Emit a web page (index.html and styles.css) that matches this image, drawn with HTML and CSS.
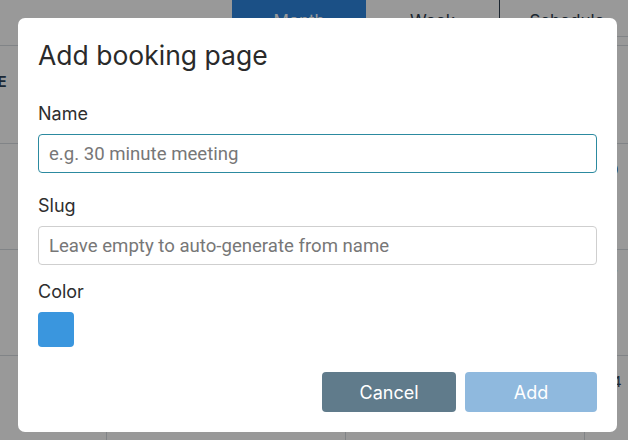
FILE: index.html
```html
<!DOCTYPE html>
<html lang="en">
<head>
  <meta charset="UTF-8" />
  <meta name="viewport" content="width=device-width, initial-scale=1.0"/>
  <title>Booking pages</title>
  <link rel="stylesheet" href="styles.css">
</head>
<body>
  <div class="page">
    <div class="toolbar">
      <div class="tabs">
        <button class="tab active">Month</button>
        <button class="tab">Week</button>
        <button class="tab">Schedule</button>
      </div>
    </div>

    <div class="calendar">
      <div class="cell head">TUE</div>
      <div class="cell head">WED</div>
      <div class="cell head">THU</div>
      <div class="cell head">FRI</div>

      <div class="cell"></div>
      <div class="cell"></div>
      <div class="cell"></div>
      <div class="cell"><span class="date">10</span></div>

      <div class="cell"></div>
      <div class="cell"></div>
      <div class="cell"></div>
      <div class="cell"><span class="date">17</span></div>

      <div class="cell"></div>
      <div class="cell"></div>
      <div class="cell"></div>
      <div class="cell"><span class="date">24</span></div>
    </div>
  </div>

  <div class="backdrop">
    <div class="modal">
      <h2 class="modal-title">Add booking page</h2>

      <label class="field-label" for="bp-name">Name</label>
      <input class="field-input focused" id="bp-name" type="text" placeholder="e.g. 30 minute meeting">

      <label class="field-label" for="bp-slug">Slug</label>
      <input class="field-input slug" id="bp-slug" type="text" placeholder="Leave empty to auto-generate from name">

      <label class="field-label">Color</label>
      <div class="swatch"></div>

      <div class="actions">
        <button class="btn btn-cancel">Cancel</button>
        <button class="btn btn-add" disabled>Add</button>
      </div>
    </div>
  </div>
</body>
</html>
```

FILE: styles.css
```css
body {
  margin: 0;
  font-family: Inter, "Noto Sans", sans-serif;
  background: #fff;
  overflow: hidden;
}

/* page under the dialog */
.page {
  width: 628px;
  height: 440px;
  overflow: hidden;
}
.toolbar {
  display: flex;
  height: 37px;
  padding-left: 232px;
}
.tabs {
  display: flex;
  flex: 1;
  border-bottom: 1px solid #d8dde2;
}
.tab {
  width: 134px;
  border: none;
  border-right: 1px solid #2f4050;
  background: #fff;
  color: #2f4050;
  font-family: Inter, sans-serif;
  font-size: 17px;
  padding: 5px 0 0;
  text-align: center;
  align-self: stretch;
}
.tab.active {
  background: #2d86e0;
  color: #fff;
  border-right: none;
}
.tab:last-child { border-right: none; flex: 1; }

.calendar {
  display: grid;
  grid-template-columns: repeat(4, 239px);
  grid-template-rows: 98px 106px 106px 106px;
  margin-top: 8px;
  margin-left: -132px;
  border-top: 1px solid #d8dde2;
}
.cell {
  border-right: 1px solid #d8dde2;
  border-bottom: 1px solid #d8dde2;
  padding: 16px 18px;
  font-size: 15px;
  color: #33475b;
}
.cell.head {
  border-right: none;
  text-align: center;
  font-weight: 700;
  padding: 26px 14px 0 22px;
  color: #2d4459;
}

/* dialog */
.backdrop {
  position: fixed;
  inset: 0;
  background: rgba(0, 0, 0, 0.4);
}
.modal {
  position: absolute;
  left: 18px;
  top: 18px;
  width: 599px;
  height: 414px;
  box-sizing: border-box;
  padding: 20px;
  background: #fff;
  border-radius: 7px;
}
.modal-title {
  margin: 0 0 31px;
  font-size: 26.5px;
  font-weight: 400;
  line-height: 34px;
  color: #2a2a2a;
}
.field-label {
  display: block;
  font-size: 18px;
  line-height: 22px;
  color: #2e2e2e;
  margin-bottom: 9px;
}
.field-input {
  display: block;
  width: 100%;
  height: 39px;
  box-sizing: border-box;
  margin: 0 0 22px;
  padding: 0 10px;
  border: 1px solid #cfcfcf;
  border-radius: 4px;
  font-family: Roboto, sans-serif;
  font-size: 18.6px;
  color: #333;
  outline: none;
}
.field-input.slug { margin-bottom: 16px; }
.field-input::placeholder { color: #777; }
.field-input.focused { border-color: #2c8aa0; }

.swatch {
  width: 36px;
  height: 35px;
  border-radius: 4px;
  background: #3a96de;
}

.actions {
  display: flex;
  justify-content: flex-end;
  gap: 9px;
  margin-top: 25px;
}
.btn {
  width: 134px;
  height: 40px;
  border: none;
  border-radius: 4px;
  color: #fff;
  font-family: Inter, sans-serif;
  font-size: 18px;
}
.btn-cancel { background: #607b8b; }
.btn-add { background: #8fb9de; width: 132px; }
```
